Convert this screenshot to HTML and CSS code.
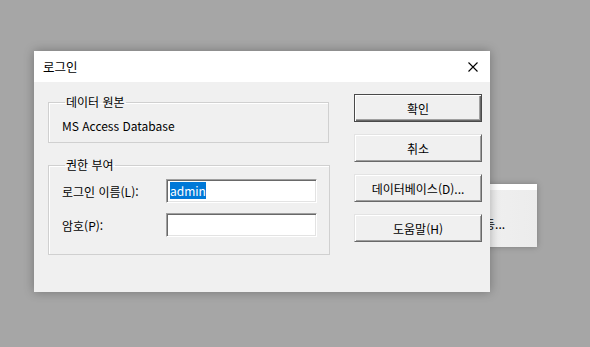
FILE: index.html
```html
<!DOCTYPE html>
<html lang="ko">
<head>
    <meta charset="UTF-8">
    <title>로그인</title>
    <link rel="stylesheet" href="styles.css">
</head>
<body>
    <div class="desktop">
        <!-- window behind the dialog -->
        <div class="back-window">
            <div class="back-title"></div>
            <div class="back-text">등...</div>
        </div>

        <div class="dialog">
            <div class="titlebar">
                <span class="title">로그인</span>
                <svg class="close" width="10" height="10" viewBox="0 0 10 10">
                    <path d="M0.5 0.5 L9.5 9.5 M9.5 0.5 L0.5 9.5" stroke="#000" stroke-width="1.1" fill="none"/>
                </svg>
            </div>
            <div class="dialog-body">
                <div class="left-col">
                    <fieldset class="group source">
                        <legend>데이터 원본</legend>
                        <div class="source-name">MS Access Database</div>
                    </fieldset>
                    <fieldset class="group auth">
                        <legend>권한 부여</legend>
                        <div class="row">
                            <span class="label">로그인 이름(L):</span>
                            <div class="field"><span class="selected">admin</span></div>
                        </div>
                        <div class="row">
                            <span class="label">암호(P):</span>
                            <div class="field"></div>
                        </div>
                    </fieldset>
                </div>
                <div class="buttons">
                    <div class="btn default"><span>확인</span></div>
                    <div class="btn">취소</div>
                    <div class="btn">데이터베이스(D)...</div>
                    <div class="btn">도움말(H)</div>
                </div>
            </div>
        </div>
    </div>
</body>
</html>
```

FILE: styles.css
```css
body {
    margin: 0;
    background: #a6a6a6;
    font-family: "Noto Sans CJK KR", "Noto Sans", sans-serif;
    font-size: 12px;
    color: #000;
}

.desktop {
    position: relative;
    width: 590px;
    height: 347px;
    overflow: hidden;
}

/* window peeking out behind the login dialog */
.back-window {
    position: absolute;
    left: 420px;
    top: 184px;
    width: 117px;
    height: 63px;
    background: linear-gradient(to right, #f4f4f4, #ececec);
    box-shadow: 0 0 6px rgba(0, 0, 0, .25);
}
.back-title {
    height: 6px;
    background: #fff;
}
.back-text {
    position: absolute;
    left: 64px;
    top: 33px;
    line-height: 14px;
}

.dialog {
    position: absolute;
    left: 34px;
    top: 51px;
    width: 456px;
    height: 241px;
    background: #f0f0f0;
    box-shadow: 0 0 10px rgba(0, 0, 0, .3);
}

.titlebar {
    display: flex;
    align-items: center;
    justify-content: space-between;
    height: 31px;
    padding: 0 12px 0 9px;
    background: #fff;
}
.title {
    font-size: 12.5px;
}

.dialog-body {
    display: flex;
    gap: 25px;
    padding: 12px 8px 0 14px;
}

.left-col {
    width: 281px;
}

.group {
    margin: 0;
    padding: 0 12px 0 13px;
    border: 1px solid #d0d0d0;
    box-shadow: inset 1px 1px #fff;
}
.group legend {
    margin-left: 3px;
    padding: 0 1px;
    line-height: 16px;
}

.source {
    height: 39px;
    padding-top: 8px;
    box-sizing: content-box;
}
.source-name {
    line-height: 16px;
}

.auth {
    margin-top: 14px;
    padding-top: 6px;
    padding-bottom: 17px;
    display: flex;
    flex-direction: column;
    gap: 10px;
}

.row {
    display: flex;
    align-items: center;
    height: 24px;
}
.label {
    width: 104px;
    flex: none;
}
.field {
    width: 151px;
    height: 24px;
    box-sizing: border-box;
    background: #fff;
    border-top: 1px solid #a0a0a0;
    border-left: 1px solid #a0a0a0;
    border-right: 1px solid #fff;
    border-bottom: 1px solid #fff;
    box-shadow: inset 1px 1px #696969, inset -1px -1px #e3e3e3;
    padding: 3px 0 0 3px;
    line-height: 16px;
}
.selected {
    background: #0078d7;
    color: #fff;
}

.buttons {
    display: flex;
    flex-direction: column;
    gap: 12px;
    width: 128px;
}
.btn {
    height: 28px;
    box-sizing: border-box;
    display: flex;
    align-items: center;
    justify-content: center;
    background: #f0f0f0;
    border-top: 1px solid #e3e3e3;
    border-left: 1px solid #e3e3e3;
    border-right: 1px solid #696969;
    border-bottom: 1px solid #696969;
    box-shadow: inset 1px 1px #fff, inset -1px -1px #a0a0a0;
}
.btn.default {
    border: 1px solid #4a4a4a;
    box-shadow: inset 1px 1px #fff, inset -1px -1px #696969, inset -2px -2px #a0a0a0;
}
```
